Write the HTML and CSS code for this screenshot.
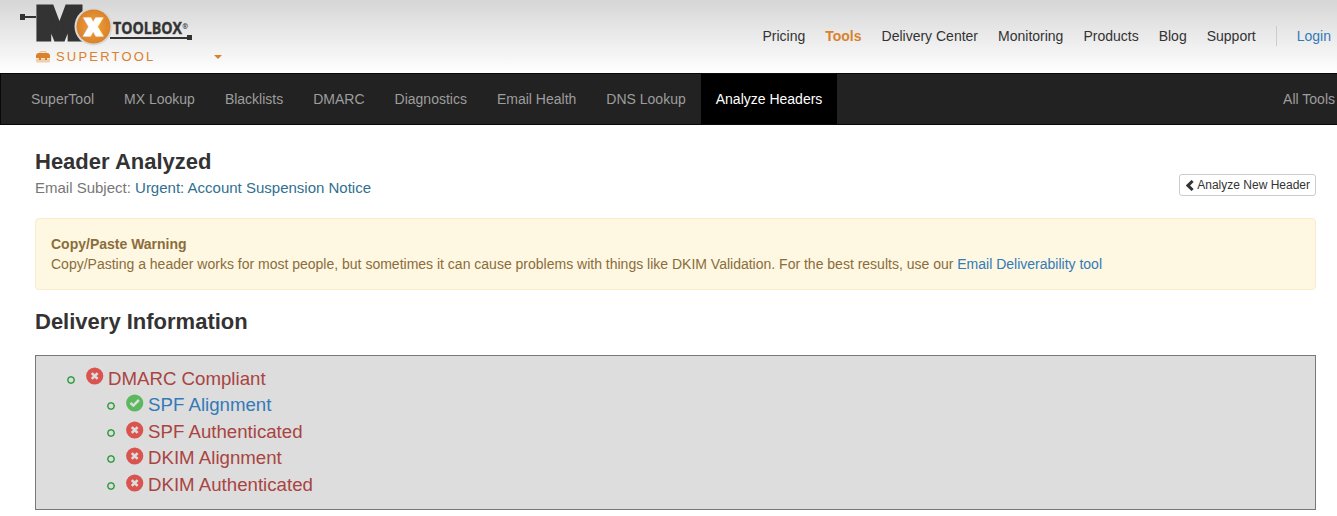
FILE: index.html
```html
<!DOCTYPE html>
<html lang="en">
<head>
<meta charset="utf-8">
<title>Header Analyzed</title>
<link rel="stylesheet" href="styles.css">
</head>
<body>
<svg class="defs" width="0" height="0" aria-hidden="true">
  <symbol id="fail" viewBox="0 0 18 18"><circle cx="8.700" cy="9" r="8.600" fill="#d9534f"/><path d="M5.800 6.100l5.800 5.800M11.600 6.100l-5.800 5.800" stroke="#ddd" stroke-width="2.700"/></symbol>
  <symbol id="pass" viewBox="0 0 18 18"><circle cx="8.700" cy="9" r="8.600" fill="#5cb85c"/><path d="M4.500 8.800l2.900 2.800 5.500-5.600" fill="none" stroke="#ddd" stroke-width="2.500"/></symbol>
</svg>
<header class="top">
  <div class="brand">
    <svg class="logo" width="180" height="48" viewBox="15 0 180 48">
      <defs><radialGradient id="orb"><stop offset="0" stop-color="#f2a33c"/><stop offset="1" stop-color="#d9822b"/></radialGradient></defs>
      <path d="M20 14h5v2h11v2H25v2h-5z" fill="#333"/>
      <text class="logo-m" x="36.500" y="38.500" textLength="46" lengthAdjust="spacingAndGlyphs">M</text>
      <path d="M110 37h77v-2h5v5h-5v-1h-77z" fill="#333"/>
      <circle cx="93.500" cy="26.500" r="19" fill="#d8d8d8"/>
      <circle cx="93.500" cy="26.500" r="17" fill="url(#orb)"/>
      <text class="logo-x" x="83.500" y="35.500" textLength="19.500" lengthAdjust="spacingAndGlyphs">x</text>
      <text class="logo-name" x="113" y="34" textLength="69" lengthAdjust="spacingAndGlyphs">TOOLBOX</text>
      <text class="logo-reg" x="182.300" y="29">®</text>
    </svg>
    <div class="product">
      <svg width="14" height="12" viewBox="0 0 14 12"><path d="M4 3V1.500Q4 .7 5 .7h4q1 0 1 .8V3" fill="none" stroke="#ebc193" stroke-width="1.300"/><path d="M0 7V5q0-3 3-3h8q3 0 3 3v2z" fill="#d9822b"/><path d="M0 7.500h14V10q0 1.500-1.500 1.500h-11Q0 11.500 0 10z" fill="#efcfac"/><path d="M3 6h2v3H3zM9 6h2v3H9z" fill="#d9822b"/></svg>
      <span>SUPERTOOL</span><i class="caret"></i>
    </div>
  </div>
  <nav class="main-nav"><a>Pricing</a><a class="current">Tools</a><a>Delivery Center</a><a>Monitoring</a><a>Products</a><a>Blog</a><a>Support</a><span class="divider"></span><a class="login">Login</a></nav>
</header>
<nav class="toolbar"><a>SuperTool</a><a>MX Lookup</a><a>Blacklists</a><a>DMARC</a><a>Diagnostics</a><a>Email Health</a><a>DNS Lookup</a><a class="active">Analyze Headers</a><a class="all">All Tools</a></nav>
<main>
  <div class="heading">
    <div><h1>Header Analyzed</h1><p class="subject">Email Subject: <span>Urgent: Account Suspension Notice</span></p></div>
    <button class="new"><svg width="8" height="11" viewBox="0 0 8 11"><path d="M6.600 1L2 5.500l4.600 4.500" fill="none" stroke="#333" stroke-width="3"/></svg>Analyze New Header</button>
  </div>
  <div class="warning"><strong>Copy/Paste Warning</strong><br>Copy/Pasting a header works for most people, but sometimes it can cause problems with things like DKIM Validation. For the best results, use our <a>Email Deliverability tool</a></div>
  <h2>Delivery Information</h2>
  <section class="results">
    <ul>
      <li><i class="dot"></i><svg><use href="#fail"/></svg><span>DMARC Compliant</span></li>
      <li class="sub"><i class="dot"></i><svg><use href="#pass"/></svg><span class="ok">SPF Alignment</span></li>
      <li class="sub"><i class="dot"></i><svg><use href="#fail"/></svg><span>SPF Authenticated</span></li>
      <li class="sub"><i class="dot"></i><svg><use href="#fail"/></svg><span>DKIM Alignment</span></li>
      <li class="sub"><i class="dot"></i><svg><use href="#fail"/></svg><span>DKIM Authenticated</span></li>
    </ul>
  </section>
</main>
</body>
</html>
```
FILE: styles.css
```css
* { box-sizing: border-box; }
body { margin: 0; background: #fff; color: #333; font: 14px/20px "Liberation Sans", Arial, sans-serif; overflow: hidden; }
.defs { position: absolute; }
.top { height: 73px; display: flex; justify-content: space-between; background: linear-gradient(#d6d6d6, #fff); }
.brand { padding-left: 15px; }
.logo { display: block; overflow: visible; }
.logo-m { font: 900 45px Roboto, sans-serif; fill: #333; stroke: #333; stroke-width: 5px; stroke-linejoin: miter; }
.logo-x { font: 900 32px "Open Sans", sans-serif; fill: #fff; stroke: #fff; stroke-width: 1px; }
.logo-name { font: bold 16px "Open Sans", sans-serif; fill: #333; stroke: #333; stroke-width: .4px; }
.logo-reg { font: bold 7px "Open Sans", sans-serif; fill: #333; }
.product { display: flex; align-items: center; height: 18px; padding-left: 21px; color: #d9822b; font-size: 13px; letter-spacing: 2.2px; }
.product span { margin-left: 6px; width: 158px; }
.product svg { margin-bottom: 1px; }
.caret { border: 4px solid transparent; border-top-color: #d9822b; border-bottom: 0; }
.main-nav { display: flex; gap: 20px; align-items: center; padding: 0 6px 2px 0; }
.current { color: #d9822b; font-weight: bold; }
.divider { width: 1px; height: 20px; background: #ccc; }
.login { color: #337ab7; }
.toolbar { height: 52px; display: flex; background: #222; border: 1px solid #080808; border-right: 0; padding-left: 15px; color: #9d9d9d; }
.toolbar a { padding: 15px; }
.toolbar .active { background: #000; color: #fff; }
.toolbar .all { margin-left: auto; padding-right: 2px; }
main { padding: 24px 21px 0 35px; }
.heading { display: flex; justify-content: space-between; height: 69px; }
h1, h2 { margin: 0; font-size: 22px; line-height: 25px; }
.subject { margin: 4px 0 0; font-size: 15px; color: #777; }
.subject span { color: #31708f; }
.new { display: flex; align-items: center; gap: 3px; height: 22px; margin: 25px 0 0; padding: 0 5px 0 6px; border: 1px solid #ccc; border-radius: 3px; background: #fff; color: #333; font: 12px/18px "Liberation Sans", Arial, sans-serif; }
.warning { height: 72px; padding: 15px; border: 1px solid #faebcc; border-radius: 4px; background: #fef7e2; color: #8a6d3b; }
.warning a { color: #337ab7; }
h2 { margin-top: 19px; }
.results { height: 155px; margin-top: 21px; padding: 9px 0 0 31px; background: #ddd; border: 1px solid #777; }
ul { margin: 0; padding: 0; list-style: none; }
li { display: flex; height: 26.6px; line-height: 26.6px; font-size: 18.67px; color: #a94442; }
li.sub { padding-left: 40px; }
li span { padding-top: .6px; }
li svg { width: 18px; height: 18px; margin: 2.4px 4px 0 11px; }
.dot { width: 8px; height: 8px; margin-top: 10.6px; border: 1.5px solid #2c9b3c; border-radius: 50%; }
.dot { background: radial-gradient(circle, transparent 2px, #2c9b3c 3px); }
.ok { color: #337ab7; }
```
